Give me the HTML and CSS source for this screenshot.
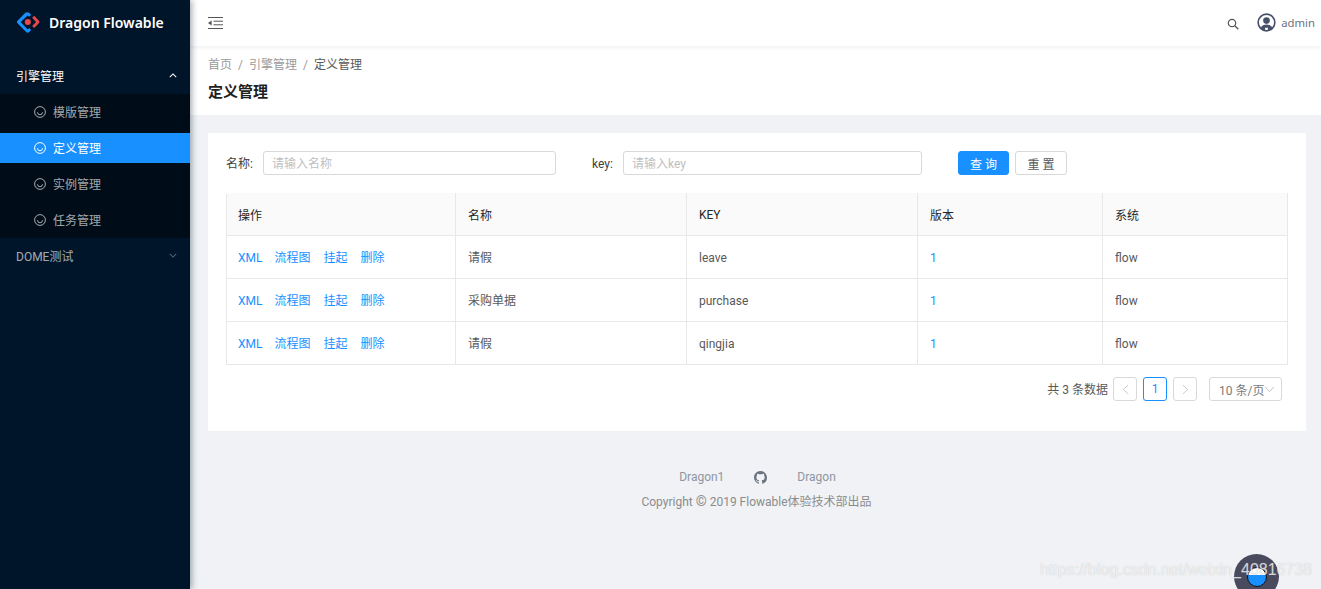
FILE: index.html
```html
<!DOCTYPE html>
<html lang="zh-CN">
<head>
  <meta charset="UTF-8">
  <meta name="viewport" content="width=device-width, initial-scale=1.0">
  <title>Dragon Flowable</title>
  <link rel="stylesheet" href="styles.css">
</head>
<body>
  <aside class="sider">
    <div class="logo">
      <svg class="logo-mark" viewBox="0 0 26 26" width="24" height="24">
        <path d="M11 2.2 1.6 11.6a2 2 0 0 0 0 2.8L11 23.800a2.500 2.500 0 0 0 3.400 0l2-2-2.200-2.200-1.500 1.500L5 13l7.700-7.100 1.500 1.500 2.200-2.200-2-2a2.500 2.500 0 0 0-3.400 0z" fill="#1890ff"/>
        <path d="m17.500 8.300 2.200-2.200 5 5.400a2 2 0 0 1 0 2.800l-5 5.300-2.200-2.200L21.700 13z" fill="#e8474c"/>
        <circle cx="12.800" cy="13" r="3.300" fill="#e8474c"/>
      </svg>
      <span class="logo-text">Dragon Flowable</span>
    </div>
    <nav class="menu">
      <div class="menu-title open">
        <span>引擎管理</span>
        <svg viewBox="0 0 10 6" width="8" height="5"><path d="M1 5 5 1l4 4" fill="none" stroke="currentColor" stroke-width="1.300"/></svg>
      </div>
      <ul class="submenu">
        <li class="submenu-item">
          <svg class="smile" viewBox="0 0 12 12" width="12" height="12"><circle cx="6" cy="6" r="5.400"/><path d="M3.500 6.300a2.500 2.500 0 0 0 5 0"/></svg>
          模版管理
        </li>
        <li class="submenu-item active">
          <svg class="smile" viewBox="0 0 12 12" width="12" height="12"><circle cx="6" cy="6" r="5.400"/><path d="M3.500 6.300a2.500 2.500 0 0 0 5 0"/></svg>
          定义管理
        </li>
        <li class="submenu-item">
          <svg class="smile" viewBox="0 0 12 12" width="12" height="12"><circle cx="6" cy="6" r="5.400"/><path d="M3.500 6.300a2.500 2.500 0 0 0 5 0"/></svg>
          实例管理
        </li>
        <li class="submenu-item">
          <svg class="smile" viewBox="0 0 12 12" width="12" height="12"><circle cx="6" cy="6" r="5.400"/><path d="M3.500 6.300a2.500 2.500 0 0 0 5 0"/></svg>
          任务管理
        </li>
      </ul>
      <div class="menu-title closed">
        <span>DOME测试</span>
        <svg viewBox="0 0 10 6" width="8" height="5"><path d="M1 1l4 4 4-4" fill="none" stroke="currentColor" stroke-width="1.300"/></svg>
      </div>
    </nav>
  </aside>

  <div class="main">
    <header class="topbar">
      <svg class="fold" viewBox="0 0 15 12" width="15" height="12">
        <path d="M0 .5h15M5.500 4.200H15M5.500 7.800H15M0 11.500h15" fill="none" stroke="#555" stroke-width="1"/>
        <path d="M3.600 3.400v5.200L0 6z" fill="#555"/>
      </svg>
      <div class="topbar-right">
        <svg class="search" viewBox="0 0 12 12" width="12" height="12">
          <circle cx="5" cy="5" r="3.700" fill="none" stroke="#555" stroke-width="1.200"/>
          <path d="m7.800 7.800 3.500 3.500" stroke="#555" stroke-width="1.300"/>
        </svg>
        <div class="user">
          <svg viewBox="0 0 20 20" width="19" height="19">
            <circle cx="10" cy="10" r="8.800" fill="#fff" stroke="#47506a" stroke-width="1.700"/>
            <circle cx="10" cy="8" r="3.500" fill="#47506a"/>
            <path d="M3.800 15.500c1.500-2.600 3.500-3.500 6.200-3.500s4.700.9 6.200 3.500L13 18.500h-1.500v-3h-3v3H7z" fill="#47506a"/>
          </svg>
          <span>admin</span>
        </div>
      </div>
    </header>

    <section class="page-head">
      <div class="crumbs">
        <span>首页</span><i>/</i><span>引擎管理</span><i>/</i><span class="current">定义管理</span>
      </div>
      <h1>定义管理</h1>
    </section>

    <section class="card">
      <form class="search-form">
        <label class="field-label label-name">名称:</label>
        <input class="input input-name" placeholder="请输入名称">
        <label class="field-label label-key">key:</label>
        <input class="input input-key" placeholder="请输入key">
        <button type="button" class="btn btn-primary">查 询</button>
        <button type="button" class="btn">重 置</button>
      </form>

      <table class="grid">
        <colgroup>
          <col class="col-a"><col class="col-b"><col class="col-c"><col class="col-d"><col class="col-e">
        </colgroup>
        <thead>
          <tr><th>操作</th><th>名称</th><th>KEY</th><th>版本</th><th>系统</th></tr>
        </thead>
        <tbody>
          <tr>
            <td class="actions"><a>XML</a><a>流程图</a><a>挂起</a><a>删除</a></td>
            <td class="name">请假</td><td>leave</td><td class="ver">1</td><td>flow</td>
          </tr>
          <tr>
            <td class="actions"><a>XML</a><a>流程图</a><a>挂起</a><a>删除</a></td>
            <td class="name">采购单据</td><td>purchase</td><td class="ver">1</td><td>flow</td>
          </tr>
          <tr>
            <td class="actions"><a>XML</a><a>流程图</a><a>挂起</a><a>删除</a></td>
            <td class="name">请假</td><td>qingjia</td><td class="ver">1</td><td>flow</td>
          </tr>
        </tbody>
      </table>

      <div class="pager">
        <span class="total">共 3 条数据</span>
        <span class="page-btn disabled"><svg viewBox="0 0 8 12" width="7" height="11"><path d="M7 1 1.500 6 7 11" fill="none" stroke="currentColor"/></svg></span>
        <span class="page-btn current">1</span>
        <span class="page-btn disabled"><svg viewBox="0 0 8 12" width="7" height="11"><path d="M1 1l5.500 5L1 11" fill="none" stroke="currentColor"/></svg></span>
        <span class="size-select">10 条/页<svg viewBox="0 0 12 8" width="11" height="7"><path d="M1 1l5 5.500L11 1" fill="none" stroke="#bbb"/></svg></span>
      </div>
    </section>

    <footer class="foot">
      <div class="foot-links">
        <span>Dragon1</span>
        <svg viewBox="0 0 16 16" width="13" height="13"><path fill="#6b7280" d="M8 0C3.580 0 0 3.580 0 8c0 3.540 2.290 6.530 5.470 7.590.4.070.55-.17.55-.38 0-.19-.01-.82-.01-1.490-2.010.37-2.530-.49-2.690-.94-.09-.23-.48-.94-.82-1.130-.28-.15-.68-.52-.01-.53.630-.01 1.080.58 1.230.82.720 1.210 1.870.87 2.330.66.070-.52.280-.87.510-1.070-1.780-.2-3.640-.89-3.640-3.950 0-.87.310-1.590.82-2.150-.08-.2-.36-1.020.08-2.120 0 0 .67-.21 2.200.82.640-.18 1.320-.27 2-.27s1.360.09 2 .27c1.530-1.040 2.200-.82 2.200-.82.440 1.100.16 1.920.08 2.120.51.560.82 1.270.82 2.150 0 3.070-1.870 3.750-3.650 3.950.29.250.54.730.54 1.480 0 1.070-.01 1.930-.01 2.200 0 .21.150.46.550.38A8.010 8.010 0 0 0 16 8c0-4.420-3.580-8-8-8z"/></svg>
        <span>Dragon</span>
      </div>
      <div class="copyright">Copyright <span class="copy-mark">©</span> 2019 Flowable体验技术部出品</div>
    </footer>
  </div>

  <div class="float-ball"><span class="ball-water"></span></div>
  <div class="watermark">https://blog.csdn.net/weixin_40816738</div>
</body>
</html>
```

FILE: styles.css
```css
/* Global Styles */
* {
  box-sizing: border-box;
}

html, body {
  height: 100%;
}

body {
  margin: 0;
  display: flex;
  height: 589px;
  overflow: hidden;
  position: relative;
  background-color: #f0f2f5;
  color: #595959;
  font-family: Roboto, 'Noto Sans CJK SC', sans-serif;
  font-size: 12px;
}

/* Sidebar */
.sider {
  width: 190px;
  flex: none;
  background-color: #001529;
  color: rgba(255, 255, 255, 0.65);
  box-shadow: 2px 0 6px rgba(0, 21, 41, 0.35);
  position: relative;
  z-index: 2;
}

.logo {
  height: 46px;
  display: flex;
  align-items: center;
  gap: 9px;
  padding: 0 0 2px 16px;
}

.logo-text {
  color: #fff;
  font-family: 'Noto Sans', sans-serif;
  font-size: 14px;
  font-weight: 600;
  white-space: nowrap;
}

.menu {
  padding-top: 10px;
}

.menu-title {
  height: 38px;
  padding: 0 13px 0 16px;
  display: flex;
  align-items: center;
  justify-content: space-between;
  color: rgba(255, 255, 255, 0.65);
}

.menu-title svg {
  opacity: 0.5;
}

.menu-title.open {
  color: #fff;
}

.menu-title.open svg {
  opacity: 1;
}

.menu-title.closed {
  height: 36px;
  padding-bottom: 2px;
}

.submenu {
  list-style: none;
  margin: 0;
  padding: 3px 0;
  background-color: #000c17;
  display: flex;
  flex-direction: column;
  gap: 6px;
}

.submenu-item {
  height: 30px;
  padding: 0 0 2px 34px;
  display: flex;
  align-items: center;
  gap: 7px;
}

.submenu-item.active {
  background-color: #1890ff;
  color: #fff;
}

.smile {
  margin-top: 2px;
  fill: none;
  stroke: currentColor;
  stroke-width: 1;
}

/* Main column */
.main {
  flex: 1;
  min-width: 0;
}

.topbar {
  height: 46px;
  background-color: #fff;
  box-shadow: 0 1px 4px rgba(0, 21, 41, 0.08);
  display: flex;
  align-items: center;
  justify-content: space-between;
  padding: 0 6px 0 18px;
  position: relative;
}

.topbar-right {
  display: flex;
  align-items: center;
  gap: 18px;
}

.search {
  margin-top: 1px;
}

.user {
  display: flex;
  align-items: center;
  gap: 5px;
  color: #6b7280;
  font-family: 'Noto Sans', sans-serif;
  font-size: 11.300px;
  margin-top: -2px;
}

.page-head {
  height: 69px;
  background-color: #fff;
  padding: 11px 18px 0;
}

.crumbs {
  color: #9a9a9a;
  line-height: 17px;
}

.crumbs i {
  font-style: normal;
  margin: 0 6px;
}

.crumbs .current {
  color: #595959;
}

.page-head h1 {
  margin: 8px 0 0;
  font-size: 15px;
  line-height: 20px;
  font-weight: 600;
  color: #1f1f1f;
}

/* Card */
.card {
  height: 298px;
  margin: 18px 15px 0 18px;
  padding: 18px;
  background-color: #fff;
}

.search-form {
  display: flex;
  align-items: center;
  height: 24px;
}

.field-label {
  color: #404040;
}

.label-name {
  width: 37px;
  padding-bottom: 1px;
}

.label-key {
  width: 31px;
  margin-left: 36px;
  padding-top: 1px;
}

.input {
  height: 24px;
  padding: 2px 8px 0;
  border: 1px solid #d9d9d9;
  border-radius: 3px;
  font: inherit;
  outline: none;
}

.input::placeholder {
  color: #bfbfbf;
}

.input-name {
  width: 293px;
}

.input-key {
  width: 299px;
}

.btn {
  width: 52px;
  height: 24px;
  margin-left: 6px;
  padding: 0;
  border: 1px solid #d9d9d9;
  border-radius: 3px;
  background-color: #fff;
  color: #595959;
  font: inherit;
}

.btn-primary {
  width: 51px;
  margin-left: 36px;
  background-color: #1890ff;
  border-color: #1890ff;
  color: #fff;
}

/* Table */
.grid {
  width: 1061px;
  margin-top: 18px;
  border-collapse: collapse;
  table-layout: fixed;
}

.col-a { width: 229px; }
.col-b { width: 231px; }
.col-c { width: 231px; }
.col-d { width: 185px; }
.col-e { width: 185px; }

.grid th,
.grid td {
  height: 43px;
  padding: 2px 12px 0;
  border: 1px solid #e8e8e8;
  text-align: left;
  font-weight: 400;
}

.grid th {
  height: 42px;
  padding: 0 12px;
  background-color: #fafafa;
  color: #262626;
  border-top-color: #fafafa;
  border-left-color: #e8e8e8;
}

.grid th:first-child {
  padding-left: 11px;
}

.grid th:last-child {
  border-right-color: #e8e8e8;
}

.grid .name {
  padding: 0 12px 2px;
}

.grid .actions {
  padding: 0 12px 2px 11px;
}

.actions a {
  color: #1890ff;
  margin-right: 13px;
}

.actions a:first-child {
  margin-right: 12px;
}

.ver {
  color: #1890ff;
}

/* Pager */
.pager {
  display: flex;
  align-items: center;
  justify-content: flex-end;
  margin: 12px 6px 0 0;
  height: 24px;
}

.total {
  margin-right: 5px;
  padding-bottom: 2px;
}

.page-btn {
  width: 24px;
  height: 24px;
  margin-right: 6px;
  border: 1px solid #d9d9d9;
  border-radius: 3px;
  display: flex;
  align-items: center;
  justify-content: center;
}

.page-btn.disabled {
  color: #c4c4c4;
}

.page-btn.current {
  border-color: #1890ff;
  color: #1890ff;
}

.size-select {
  width: 73px;
  height: 24px;
  margin-left: 6px;
  padding-left: 9px;
  border: 1px solid #d9d9d9;
  border-radius: 3px;
  display: flex;
  align-items: center;
  color: #7a7a7a;
  white-space: nowrap;
}

/* Footer */
.foot {
  margin-top: 36px;
  text-align: center;
  color: #8c8c8c;
}

.foot-links {
  display: flex;
  justify-content: center;
  align-items: center;
  gap: 30px;
  height: 20px;
  padding-left: 4px;
  color: #8f96a3;
}

.copyright {
  margin-top: 4px;
  padding-left: 2px;
  line-height: 20px;
}

.copy-mark {
  font-size: 14px;
}

/* Things lying over the page */
.float-ball {
  position: absolute;
  left: 1234px;
  top: 554px;
  width: 45px;
  height: 45px;
  border-radius: 50%;
  background-color: #4a4a5e;
  z-index: 3;
}

.ball-water {
  position: absolute;
  left: 13px;
  top: 13px;
  width: 20px;
  height: 20px;
  border-radius: 50%;
  border: 1px solid #10131c;
  background: linear-gradient(#fff 0 40%, #1890ff 40% 100%);
}

.watermark {
  position: absolute;
  left: 1040px;
  top: 559px;
  color: rgba(255, 255, 255, 0.72);
  font-family: 'Liberation Sans', sans-serif;
  font-size: 16px;
  line-height: 22px;
  white-space: nowrap;
  text-shadow: 0 0 1px rgba(150, 150, 150, 0.55);
  z-index: 4;
}
```
